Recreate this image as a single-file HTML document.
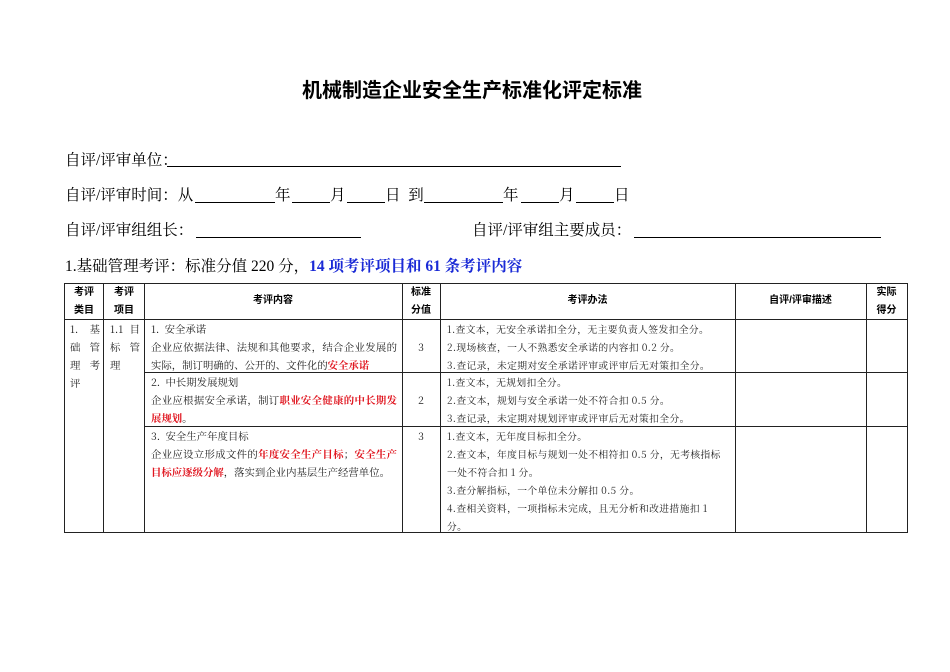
<!DOCTYPE html>
<html><head><meta charset="utf-8"><style>
*{margin:0;padding:0;box-sizing:border-box}
body{width:950px;height:672px;background:#fff;position:relative;overflow:hidden;font-family:"Liberation Serif","Noto Serif CJK SC",serif;color:#000;text-spacing-trim:space-all}
.a{position:absolute;white-space:nowrap}
.f{font-size:15.5px;line-height:18px}
.u{position:absolute;border-bottom:1px solid #000;height:1px}
.h{font-family:"Liberation Sans","Noto Sans CJK SC",sans-serif;font-size:10px;line-height:18px;text-align:center;font-weight:bold;position:absolute}
.t{position:absolute;font-size:10.4px;line-height:18px;color:#222;font-family:"Noto Serif CJK SC",serif;text-align:justify}
.m{font-size:9.8px;letter-spacing:0.35px}
.r{color:#e0141e;font-weight:bold}
.v{position:absolute;background:#222;width:1px}
.hz{position:absolute;background:#222;height:1px}
</style></head><body>
<div class="a" style="left:302px;top:79px;font-size:20px;line-height:24px;font-weight:bold;font-family:'Liberation Sans','Noto Sans CJK SC',sans-serif">机械制造企业安全生产标准化评定标准</div>

<div class="a f" style="left:65px;top:152px">自评/评审单位：</div>
<div class="u" style="left:167px;top:166px;width:454px"></div>

<div class="a f" style="left:65px;top:187px">自评/评审时间：从</div>
<div class="u" style="left:195px;top:202px;width:80px"></div>
<div class="a f" style="left:275px;top:187px">年</div>
<div class="u" style="left:292px;top:202px;width:38px"></div>
<div class="a f" style="left:330px;top:187px">月</div>
<div class="u" style="left:347px;top:202px;width:38px"></div>
<div class="a f" style="left:385px;top:187px">日&nbsp;&nbsp;到</div>
<div class="u" style="left:424px;top:202px;width:79px"></div>
<div class="a f" style="left:503px;top:187px">年</div>
<div class="u" style="left:521px;top:202px;width:38px"></div>
<div class="a f" style="left:559px;top:187px">月</div>
<div class="u" style="left:576px;top:202px;width:38px"></div>
<div class="a f" style="left:614px;top:187px">日</div>

<div class="a f" style="left:65px;top:222px">自评/评审组组长：</div>
<div class="u" style="left:196px;top:237px;width:165px"></div>
<div class="a f" style="left:472px;top:222px">自评/评审组主要成员：</div>
<div class="u" style="left:634px;top:237px;width:247px"></div>

<div class="a f" style="left:65px;top:258px">1.基础管理考评：标准分值 220 分，<b style="color:#1a2ad6">14 项考评项目和 61 条考评内容</b></div>

<div class="hz" style="left:64px;top:283px;width:844px"></div>
<div class="hz" style="left:64px;top:319px;width:844px"></div>
<div class="hz" style="left:144px;top:372px;width:764px"></div>
<div class="hz" style="left:144px;top:426px;width:764px"></div>
<div class="hz" style="left:64px;top:532px;width:844px"></div>
<div class="v" style="left:64px;top:283px;height:250px"></div>
<div class="v" style="left:103px;top:283px;height:250px"></div>
<div class="v" style="left:144px;top:283px;height:250px"></div>
<div class="v" style="left:402px;top:283px;height:250px"></div>
<div class="v" style="left:440px;top:283px;height:250px"></div>
<div class="v" style="left:735px;top:283px;height:250px"></div>
<div class="v" style="left:866px;top:283px;height:250px"></div>
<div class="v" style="left:907px;top:283px;height:250px"></div>

<div class="h" style="left:64px;top:284px;width:40px">考评<br>类目</div>
<div class="h" style="left:104px;top:284px;width:40px">考评<br>项目</div>
<div class="h" style="left:144px;top:292px;width:258px">考评内容</div>
<div class="h" style="left:402px;top:284px;width:38px">标准<br>分值</div>
<div class="h" style="left:440px;top:292px;width:295px">考评办法</div>
<div class="h" style="left:735px;top:292px;width:131px">自评/评审描述</div>
<div class="h" style="left:866px;top:284px;width:41px">实际<br>得分</div>

<div class="t" style="left:70px;top:320px;width:30px;text-align-last:justify">1. 基<br>础 管<br>理 考</div>
<div class="t" style="left:70px;top:374px">评</div>
<div class="t" style="left:110px;top:320px;width:30px;text-align-last:justify">1.1 目<br>标 管</div>
<div class="t" style="left:110px;top:356px">理</div>

<div class="t" style="left:151px;top:320px;width:246px">1.&nbsp; 安全承诺<br>企业应依据法律、法规和其他要求，结合企业发展的实际，制订明确的、公开的、文件化的<span class="r">安全承诺</span></div>
<div class="t" style="left:151px;top:373px;width:246px">2.&nbsp; 中长期发展规划<br>企业应根据安全承诺，制订<span class="r">职业安全健康的中长期发展规划</span>。</div>
<div class="t" style="left:151px;top:427px;width:246px">3.&nbsp; 安全生产年度目标<br>企业应设立形成文件的<span class="r">年度安全生产目标</span>；<span class="r">安全生产目标应逐级分解</span>，落实到企业内基层生产经营单位。</div>

<div class="t" style="left:402px;top:338px;width:38px;text-align:center">3</div>
<div class="t" style="left:402px;top:391px;width:38px;text-align:center">2</div>
<div class="t" style="left:402px;top:427px;width:38px;text-align:center">3</div>

<div class="t m" style="left:447px;top:320px;width:285px">1.查文本，无安全承诺扣全分，无主要负责人签发扣全分。<br>2.现场核查，一人不熟悉安全承诺的内容扣 0.2 分。<br>3.查记录，未定期对安全承诺评审或评审后无对策扣全分。</div>
<div class="t m" style="left:447px;top:373px;width:285px">1.查文本，无规划扣全分。<br>2.查文本，规划与安全承诺一处不符合扣 0.5 分。<br>3.查记录，未定期对规划评审或评审后无对策扣全分。</div>
<div class="t m" style="left:447px;top:427px;width:285px">1.查文本，无年度目标扣全分。<br>2.查文本，年度目标与规划一处不相符扣 0.5 分，无考核指标<br>一处不符合扣 1 分。<br>3.查分解指标，一个单位未分解扣 0.5 分。<br>4.查相关资料，一项指标未完成，且无分析和改进措施扣 1<br>分。</div>
</body></html>
